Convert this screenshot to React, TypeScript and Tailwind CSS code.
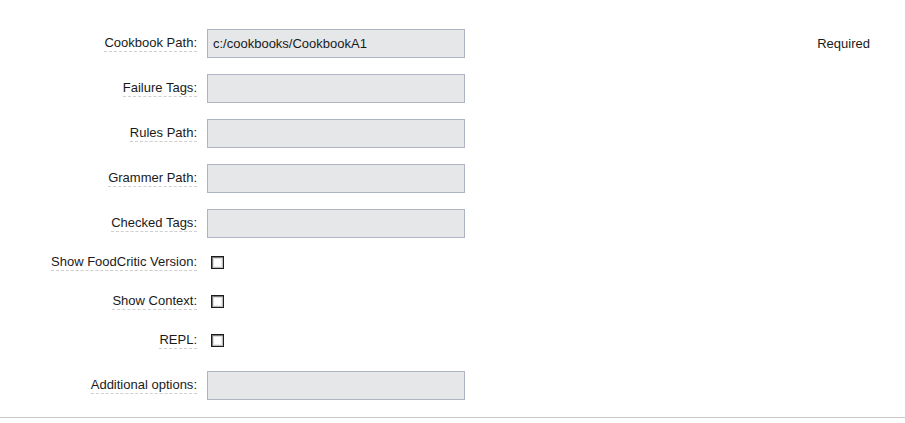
import React from "react"

const textRows = [
  { label: "Cookbook Path", value: "c:/cookbooks/CookbookA1", hint: "Required" },
  { label: "Failure Tags", value: "" },
  { label: "Rules Path", value: "" },
  { label: "Grammer Path", value: "" },
  { label: "Checked Tags", value: "" },
]

const checkRows = ["Show FoodCritic Version", "Show Context", "REPL"]

function Label({ text }: { text: string }) {
  return (
    <div className="flex w-[197px] shrink-0 justify-end">
      <span className="inline-block border-b border-dashed border-[#cfcfcf] leading-4">{text}:</span>
    </div>
  )
}

function TextField({ value }: { value: string }) {
  return (
    <div className="ml-[10px] flex h-[29px] w-[258px] items-center border border-[#aeb4c2] bg-[#e6e7e9] pl-[5px] text-[#1a1a1a]">
      {value}
    </div>
  )
}

function Checkbox() {
  return (
    <span className="ml-[14px] inline-block h-[13px] w-[13px] border border-[#1c1c1c] bg-white shadow-[inset_1px_1px_0_#7a7a7a,inset_-1px_-1px_0_#bdbdbd,inset_2px_2px_0_#dedede,inset_-2px_-2px_0_#ececec]" />
  )
}

export default function App() {
  return (
    <div className="min-h-[423px] bg-white pt-[21px] text-[13px] text-[#1a1a1a]" style={{ fontFamily: '"Liberation Sans", Arial, sans-serif' }}>
      {textRows.map((row) => (
        <div key={row.label} className="flex items-center py-2 pr-[35px]">
          <Label text={row.label} />
          <TextField value={row.value} />
          {row.hint && <span className="ml-auto leading-4">{row.hint}</span>}
        </div>
      ))}

      {checkRows.map((label) => (
        <div key={label} className="flex h-[39px] items-center pb-[6px]">
          <Label text={label} />
          <Checkbox />
        </div>
      ))}

      <div className="flex items-center pt-2 pb-2">
        <Label text="Additional options" />
        <TextField value="" />
      </div>

      <div className="mt-[9px] h-px bg-[#c8c8c8]" />
    </div>
  )
}
